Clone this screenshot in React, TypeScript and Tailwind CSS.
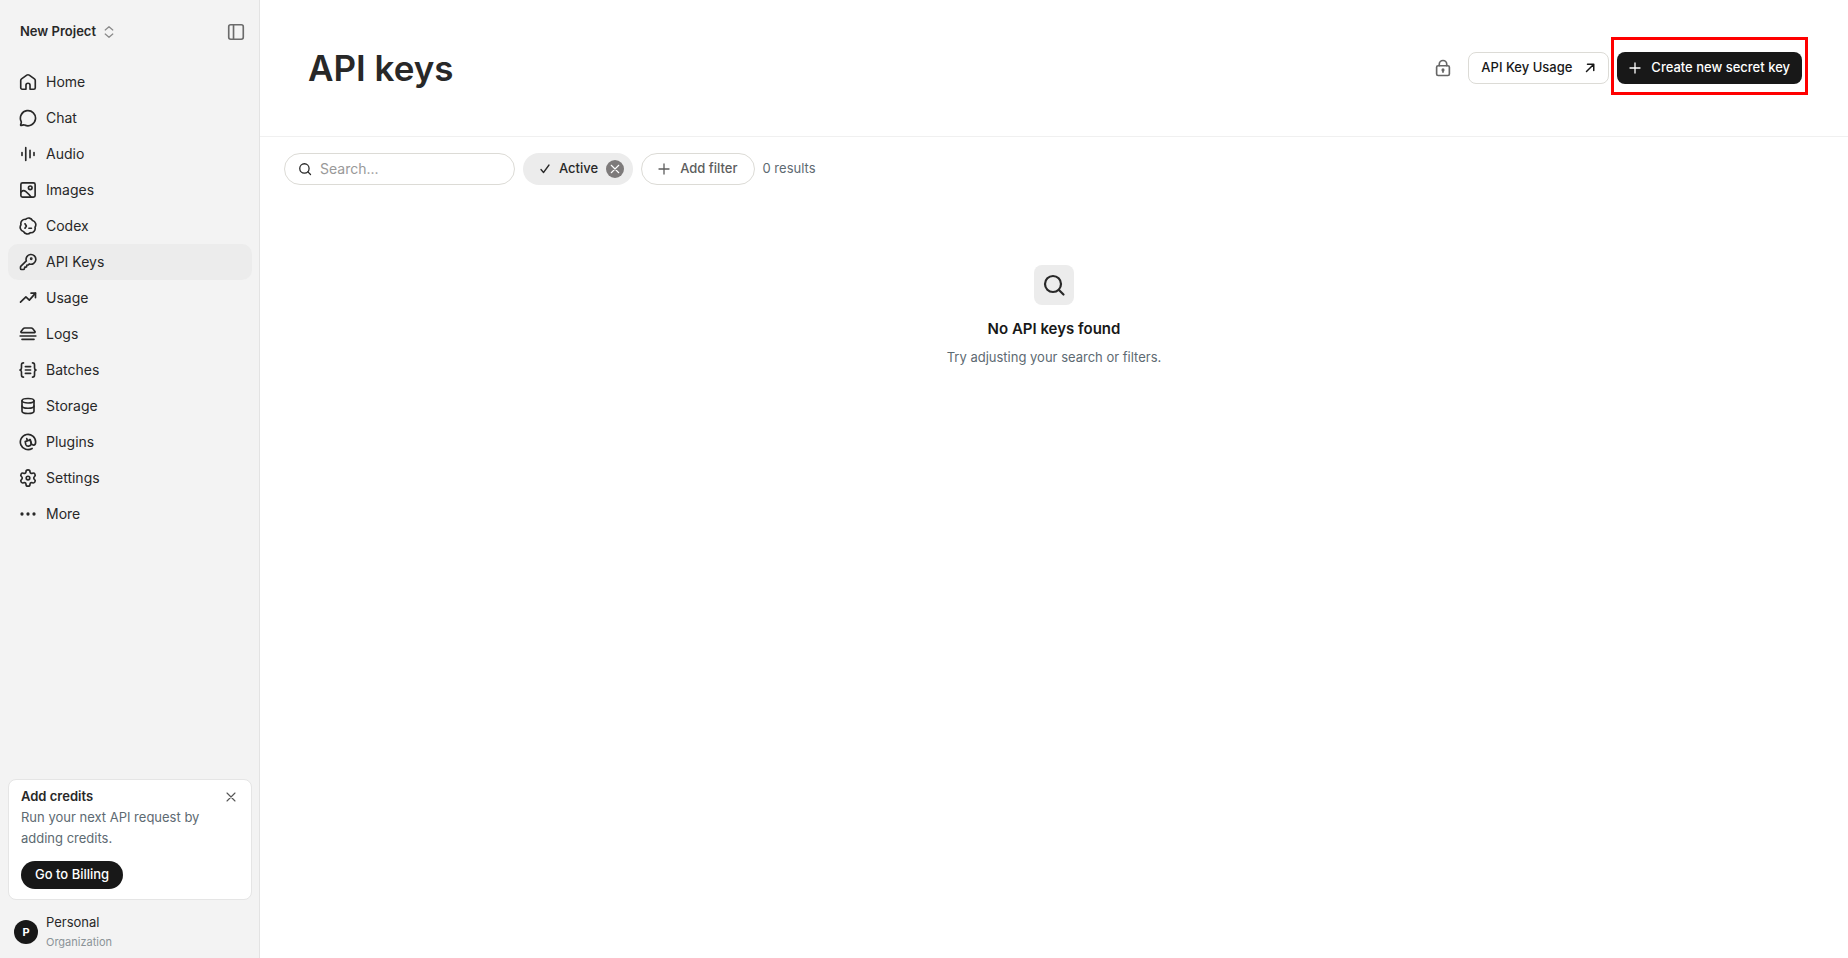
import type { ReactNode } from "react";

function Icon({
  children,
  className = "size-[18px]",
  stroke = 2.2,
}: {
  children: ReactNode;
  className?: string;
  stroke?: number;
}) {
  return (
    <svg
      viewBox="0 0 24 24"
      fill="none"
      stroke="currentColor"
      strokeWidth={stroke}
      strokeLinecap="round"
      strokeLinejoin="round"
      aria-hidden="true"
      className={`shrink-0 ${className}`}
    >
      {children}
    </svg>
  );
}

const NAV: { label: string; icon: ReactNode }[] = [
  {
    label: "Home",
    icon: (
      <path d="M9.3 21.6H4.2A1.9 1.9 0 0 1 2.3 19.7V10a2.6 2.6 0 0 1 1.1-2.1l7-5a2.7 2.7 0 0 1 3.2 0l7 5A2.6 2.6 0 0 1 21.7 10v9.7a1.9 1.9 0 0 1-1.9 1.9h-5.1v-5.3a2.7 2.7 0 0 0-5.4 0z" />
    ),
  },
  {
    label: "Chat",
    icon: (
      <path d="M2.7 16.3c.4.8.5 1.400.3 2l-.8 2.600c-.2.700.3 1.200 1 1l3-.7c.6-.1 1.100 0 1.700.3A10.100 10.100 0 1 0 2.700 16.300z" />
    ),
  },
  {
    label: "Audio",
    icon: <path d="M4 10v4M9 3.500v17M14.700 7v10M20 10v4" />,
  },
  {
    label: "Images",
    icon: (
      <>
        <rect x="2.5" y="2.5" width="19" height="19" rx="2.2" />
        <circle cx="15" cy="9" r="2.4" />
        <path d="M3 14.4c1.6-1.5 4.2-1.8 6.2-.2 2.6 2.1 4.800 4.400 6.800 7.100" />
      </>
    ),
  },
  {
    label: "Codex",
    icon: (
      <>
        <path d="M21.36 13.65A5.8 5.8 0 0 1 15.25 20.93 5.8 5.8 0 0 1 5.89 19.28 5.8 5.8 0 0 1 2.64 10.35 5.8 5.8 0 0 1 8.75 3.07 5.8 5.8 0 0 1 18.11 4.72 5.8 5.8 0 0 1 21.36 13.65z" />
        <path d="M8 9l1.8 3L8 15M13.2 15h3.4" />
      </>
    ),
  },
  {
    label: "API Keys",
    icon: (
      <>
        <path d="M2.586 17.414A2 2 0 0 0 2 18.828V20.5A1.5 1.5 0 0 0 3.5 22h2.2a1.5 1.5 0 0 0 1.5-1.3l.2-1.1a.8.8 0 0 1 .8-.7H9a1.300 1.300 0 0 0 1.300-1.300v-.8a.8.8 0 0 1 .8-.8h.472a2 2 0 0 0 1.414-.586l.814-.814a6.5 6.5 0 1 0-4-4z" />
        <circle cx="16.3" cy="7.7" r="0.8" fill="currentColor" />
      </>
    ),
  },
  {
    label: "Usage",
    icon: (
      <>
        <path d="M16 5.5h6v6" />
        <path d="M22 5.5l-8.200 9.300-4.600-4.400L2 17.600" />
      </>
    ),
  },
  {
    label: "Logs",
    icon: (
      <>
        <path d="M7.6 4h8.800c.8 0 1.500.4 2 1l2.900 3.600c.5.6.1 1.500-.7 1.500H3.400c-.8 0-1.200-.9-.7-1.500L5.600 5c.5-.6 1.200-1 2-1z" />
        <path d="M1.500 14.700h21M4 19.200h16" />
      </>
    ),
  },
  {
    label: "Batches",
    icon: (
      <>
        <path d="M6 2.500c-1.900 0-2.700 1-2.700 2.800v3.900c0 1.600-.8 2.500-2 2.800 1.200.3 2 1.200 2 2.800v3.900c0 1.800.8 2.800 2.700 2.800M18 2.500c1.900 0 2.700 1 2.700 2.800v3.900c0 1.600.8 2.500 2 2.800-1.200.3-2 1.200-2 2.800v3.900c0 1.800-.8 2.800-2.700 2.800" />
        <path d="M8.500 7.500h7M8.500 12h7M8.500 16.500h7" />
      </>
    ),
  },
  {
    label: "Storage",
    icon: (
      <>
        <ellipse cx="12" cy="5" rx="8" ry="3" />
        <path d="M4 5v14c0 1.700 3.600 3 8 3s8-1.300 8-3V5" />
        <path d="M4 12c0 1.700 3.600 3 8 3s8-1.300 8-3" />
      </>
    ),
  },
  {
    label: "Plugins",
    icon: (
      <>
        <path d="M17.500 20.600A10.200 10.200 0 1 1 22.200 12c0 2.400-1 4.200-2.900 4.200-1.500 0-2.500-1-3-2.500l-1.900-5" />
        <path d="M8.300 11.500l6.700-2.600 1.200 4.200a3.800 3.800 0 0 1-7.200 2.200zM10.300 7.500l.9 2.600" />
      </>
    ),
  },
  {
    label: "Settings",
    icon: (
      <>
        <path d="M9.300 3.800a2.700 2.700 0 0 1 5.400 0 2.200 2.200 0 0 0 3.200 1.800 2.700 2.700 0 0 1 2.700 4.600 2.200 2.200 0 0 0 0 3.600 2.700 2.700 0 0 1-2.700 4.600 2.200 2.200 0 0 0-3.200 1.800 2.700 2.700 0 0 1-5.400 0 2.200 2.200 0 0 0-3.200-1.800 2.700 2.700 0 0 1-2.700-4.600 2.200 2.200 0 0 0 0-3.600 2.700 2.700 0 0 1 2.700-4.600 2.200 2.200 0 0 0 3.200-1.800z" />
        <circle cx="12" cy="12" r="2.4" />
      </>
    ),
  },
  {
    label: "More",
    icon: (
      <g fill="currentColor" stroke="none">
        <circle cx="4" cy="12" r="2.2" />
        <circle cx="12" cy="12" r="2.2" />
        <circle cx="20" cy="12" r="2.2" />
      </g>
    ),
  },
];

function Sidebar() {
  return (
    <aside className="flex w-[260px] shrink-0 flex-col border-r border-[#e3e3e3] bg-[#f3f3f3] pr-[7px] pl-2">
      <div className="flex h-16 items-center justify-between pr-[7px] pl-3">
        <button type="button" className="flex items-center gap-1.5 text-[13px] font-semibold">
          New Project
          <Icon className="size-3.5 text-[#8a8a8a]">
            <path d="M5.500 8.500L12 3l6.500 5.500M5.500 15.500L12 21l6.500-5.500" />
          </Icon>
        </button>
        <button type="button" aria-label="Collapse sidebar" className="text-[#6b6b6b]">
          <Icon>
            <rect x="2.3" y="2.3" width="19.4" height="19.4" rx="2.6" />
            <path d="M8.700 2.500v19" />
          </Icon>
        </button>
      </div>

      <nav className="flex flex-col">
        {NAV.map((item) => (
          <a
            key={item.label}
            href="#"
            className={`flex h-9 items-center gap-[9px] rounded-[10px] px-[11px] text-sm ${
              item.label === "API Keys" ? "bg-[#ececec]" : ""
            }`}
          >
            <Icon>{item.icon}</Icon>
            {item.label}
          </a>
        ))}
      </nav>

      {/* Billing prompt */}
      <section className="mt-auto rounded-lg border border-[#e5e5e5] bg-white px-3 pt-1.5 pb-2.5">
        <div className="flex items-center justify-between">
          <h2 className="text-[13px] leading-[21px] font-semibold">Add credits</h2>
          <button type="button" aria-label="Dismiss" className="mr-0.5 text-[#555]">
            <Icon className="size-3">
              <path d="M4 4l16 16M20 4L4 20" />
            </Icon>
          </button>
        </div>
        <p className="text-[13px] leading-[21px] text-[#5d6a72]">
          Run your next API request by adding credits.
        </p>
        <button
          type="button"
          className="mt-3 flex h-7 items-center rounded-full bg-[#181818] px-3.5 text-[13px] font-medium text-white"
        >
          Go to Billing
        </button>
      </section>

      <button type="button" className="flex items-center gap-2 px-1.5 pt-3 pb-1.5 text-left">
        <span className="flex size-6 items-center justify-center rounded-full bg-[#181818] text-[11px] font-bold text-white">
          P
        </span>
        <span className="flex flex-col">
          <span className="text-[13px] leading-5">Personal</span>
          <span className="text-[11px] leading-5 text-[#8b9398]">Organization</span>
        </span>
      </button>
    </aside>
  );
}

export default function App() {
  return (
    <div className="flex min-h-screen bg-white font-['Inter',sans-serif] text-[#282828]">
      <Sidebar />

      <main className="flex min-w-0 flex-1 flex-col">
        <header className="flex h-[137px] items-center justify-between border-b border-[#f0f0f0] pr-[46px] pl-12">
          <h1 className="text-[35px] font-semibold">API keys</h1>
          <div className="flex items-center gap-2">
            <button type="button" aria-label="Permissions" className="mr-2 text-[#666]">
              <Icon>
                <rect x="3.5" y="9" width="17" height="13" rx="2" />
                <path d="M7 9V7a5 5 0 0 1 10 0v2M12 15.500v2" />
                <circle cx="12" cy="14.5" r="1" fill="currentColor" />
              </Icon>
            </button>
            <a
              href="#"
              className="flex h-8 items-center gap-3 rounded-lg border border-[#dcdbd6] px-3 text-[13px] font-medium text-[#181818]"
            >
              API Key Usage
              <Icon className="size-3" stroke={3}>
                <path d="M5 19L18.500 5.500M7 4.500h12.500V17" />
              </Icon>
            </a>
            <div className="relative">
              <button
                type="button"
                className="flex h-8 items-center gap-2.5 rounded-lg bg-[#181818] px-3 text-[13px] font-medium text-white"
              >
                <Icon className="size-3" stroke={2.6}>
                  <path d="M12 2v20M2 12h20" />
                </Icon>
                Create new secret key
              </button>
              {/* Callout frame */}
              <div className="pointer-events-none absolute -top-[15px] -right-1.5 -bottom-[11px] -left-1.5 border-[3px] border-[#ff0000]" />
            </div>
          </div>
        </header>

        <div className="flex items-center gap-2 px-6 py-4 text-[13px]">
          <label className="flex h-8 w-[231px] items-center gap-2 rounded-full border border-[#dcdbd6] px-[13px]">
            <Icon className="size-3.5">
              <circle cx="11" cy="11" r="8" />
              <path d="M17 17l4.500 4.500" />
            </Icon>
            <input
              type="text"
              aria-label="Search"
              placeholder="Search..."
              className="w-full min-w-0 bg-transparent text-sm outline-none placeholder:text-[#999]"
            />
          </label>
          <div className="flex h-8 items-center gap-2 rounded-full bg-[#ececec] pr-[9px] pl-4 font-medium">
            <Icon className="size-3" stroke={2.6}>
              <path d="M4 13l5 6L20 4" />
            </Icon>
            Active
            <button
              type="button"
              aria-label="Remove Active filter"
              className="flex size-[18px] items-center justify-center rounded-full bg-[#7d7a7a] text-white"
            >
              <Icon className="size-2.5" stroke={2.6}>
                <path d="M3 3l18 18M21 3L3 21" />
              </Icon>
            </button>
          </div>
          <button
            type="button"
            className="flex h-8 items-center gap-2.5 rounded-full border border-[#dcdbd6] px-4 font-medium text-[#5d5d5d]"
          >
            <Icon className="size-3" stroke={2.6}>
              <path d="M12 2v20M2 12h20" />
            </Icon>
            Add filter
          </button>
          <span className="text-[#5d6a72]">0 results</span>
        </div>

        <section className="mt-16 flex flex-col items-center">
          <div className="flex size-10 items-center justify-center rounded-lg bg-[#ececec]">
            <Icon className="size-6">
              <circle cx="11" cy="11" r="8" />
              <path d="M17 17l4.500 4.500" />
            </Icon>
          </div>
          <h2 className="mt-3 text-[15px] leading-6 font-semibold text-[#181818]">No API keys found</h2>
          <p className="mt-1.5 text-[13px] leading-5 text-[#5d6a72]">Try adjusting your search or filters.</p>
        </section>
      </main>
    </div>
  );
}
